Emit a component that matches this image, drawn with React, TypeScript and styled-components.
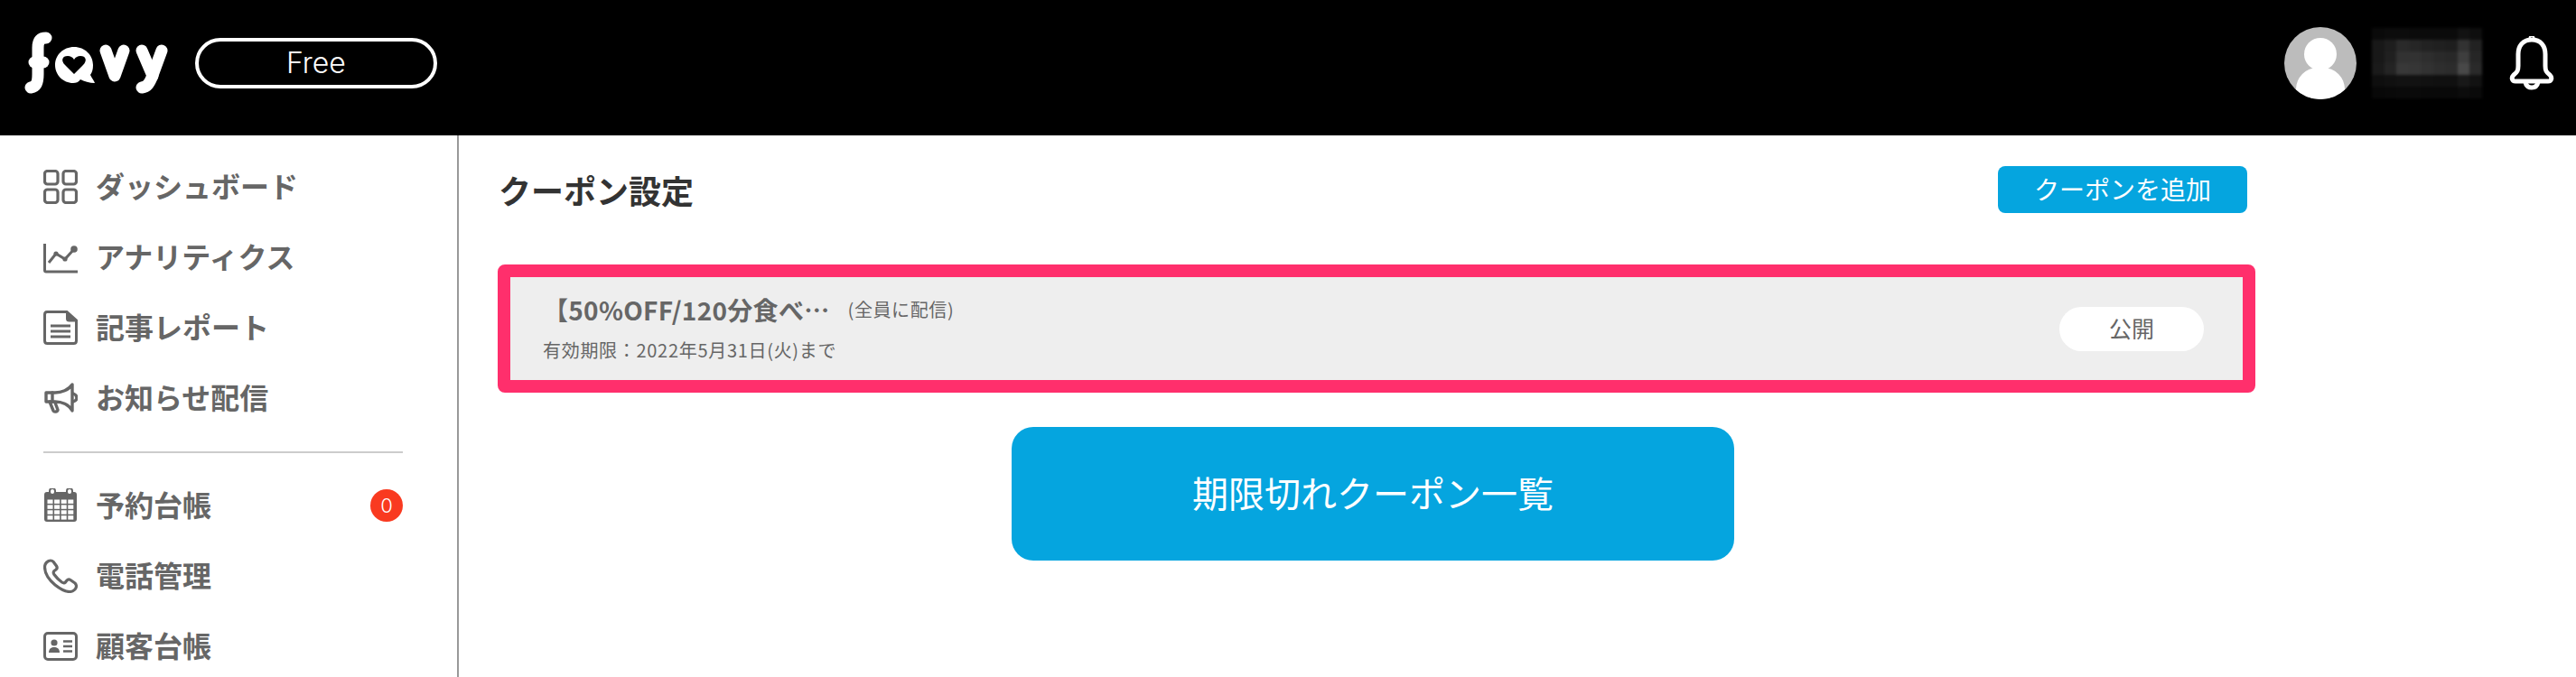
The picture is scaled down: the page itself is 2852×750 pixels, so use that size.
import React from "react";
import styled, { createGlobalStyle } from "styled-components";

const GlobalStyle = createGlobalStyle`
  html, body {
    margin: 0;
    padding: 0;
    background: #fff;
    font-family: "Noto Sans CJK JP", "Noto Sans", sans-serif;
    overflow: hidden;
  }
  * { box-sizing: border-box; }
`;

const mosaic = [
  [10, 12, 12, 11, 11, 11, 11, 18, 14],
  [24, 30, 42, 38, 34, 32, 30, 50, 34],
  [24, 32, 50, 50, 46, 42, 40, 62, 38],
  [26, 36, 56, 54, 50, 46, 44, 72, 42],
  [14, 16, 18, 18, 17, 16, 16, 24, 18],
  [8, 9, 10, 10, 9, 9, 9, 12, 10],
];

const Logo = () => (
  <svg width="160" height="72" viewBox="0 0 160 72" fill="none">
    <g stroke="#fff" strokeWidth="13" strokeLinecap="round" strokeLinejoin="round">
      <path d="M24 8C17 8 15 12 15 19V48C15 58 13 62 7 63" />
      <path d="M11 35H21" />
      <path d="M90 22L100 50L110 22" />
      <path d="M130 22L142 50" />
      <path d="M152 22L141 52C138 59 136 62 130 63" />
    </g>
    <path
      d="M55 18C67 18 76 27 76 38C76 43 75 46 73 49C75 53 77 55 78 58C72 58 66 56 62 54C60 57 57 58 54 58C43 58 34 49 34 38C34 27 43 18 55 18Z"
      fill="#fff"
    />
    <path
      d="M55 48L45 38C40 33 42 28 48 28C51 28 53 29 55 32C57 29 59 28 62 28C68 28 70 33 65 38Z"
      fill="#000"
    />
  </svg>
);

const Bell = () => (
  <svg width="50" height="60" viewBox="0 0 50 60" fill="none" stroke="#fff" strokeWidth="5" strokeLinecap="round" strokeLinejoin="round">
    <path d="M25 4C15 4 10 11 10 20V33C10 38 9 40 5 43C2 46 3 50 7 50H43C47 50 48 46 45 43C41 40 40 38 40 33V20C40 11 35 4 25 4Z" />
    <path d="M18 51C19 56 22 57 25 57C28 57 31 56 32 51" />
    <circle cx="25" cy="2.5" r="1" />
  </svg>
);

const DashboardIcon = () => (
  <svg width="38" height="38" viewBox="0 0 38 38" fill="none" stroke="#666" strokeWidth="3.2">
    <rect x="1.5" y="1.5" width="14.5" height="14.5" rx="3" />
    <rect x="22" y="1.5" width="14.5" height="14.5" rx="3" />
    <rect x="1.5" y="22" width="14.5" height="14.5" rx="3" />
    <rect x="22" y="22" width="14.5" height="14.5" rx="3" />
  </svg>
);

const AnalyticsIcon = () => (
  <svg width="38" height="38" viewBox="0 0 38 38" fill="none" stroke="#666" strokeWidth="3">
    <path d="M1.5 4V33.5C1.5 34.5 2 35 3 35H38" />
    <path d="M6 25L14 15L24 21L34 10" strokeWidth="3" />
    <circle cx="14" cy="15" r="2.6" fill="#666" stroke="none" />
    <circle cx="24" cy="21" r="2.6" fill="#666" stroke="none" />
    <circle cx="34" cy="10" r="3.8" fill="#666" stroke="none" />
  </svg>
);

const ReportIcon = () => (
  <svg width="38" height="38" viewBox="0 0 38 38" fill="none" stroke="#666" strokeWidth="3">
    <path d="M4 1.5H26L36.5 11V33.5C36.5 35.5 35.5 36.5 33.5 36.5H4.5C2.5 36.5 1.5 35.5 1.5 33.5V4.5C1.5 2.5 2.5 1.5 4 1.5Z" />
    <path d="M26 2V9C26 10.5 27 11.5 28.5 11.5H36" fill="#666" strokeWidth="2" />
    <path d="M8 17H30M8 23H30M8 29H30" />
  </svg>
);

const MegaphoneIcon = () => (
  <svg width="38" height="38" viewBox="0 0 38 38" fill="none" stroke="#666" strokeWidth="3.4" strokeLinejoin="round" strokeLinecap="round">
    <path d="M32 4V33C28 26 20 23 13 23H3V13H13C20 13 28 10 32 4Z" />
    <path d="M33 14C36 15 37 17 37 19C37 21 36 22 33 23" />
    <path d="M10 13V23" />
    <path d="M7 23L11 33C12 35 16 34 16 32L13 24" />
  </svg>
);

const CalendarIcon = () => (
  <svg width="38" height="38" viewBox="0 0 38 38" fill="none">
    <path d="M4 4H34C36 4 37 5 37 7V34C37 36 36 37 34 37H4C2 37 1 36 1 34V7C1 5 2 4 4 4Z" fill="#666" />
    <rect x="7" y="0" width="6" height="7" rx="3" fill="#fff" stroke="#666" strokeWidth="2" />
    <rect x="26" y="0" width="6" height="7" rx="3" fill="#fff" stroke="#666" strokeWidth="2" />
    {[0, 1, 2, 3].map((row) =>
      [0, 1, 2, 3].map((col) => (
        <rect key={`${row}-${col}`} x={4.5 + col * 7.6} y={12.5 + row * 5.9} width="6" height="4.4" fill="#fff" />
      ))
    )}
  </svg>
);

const PhoneIcon = () => (
  <svg width="38" height="38" viewBox="0 0 38 38" fill="none" stroke="#666" strokeWidth="3.2" strokeLinejoin="round">
    <path d="M8 2C5 2 1.5 5 1.5 9C1.5 17 7 24 13 29C18 33 24 36.5 29 36.5C33 36.5 36.5 33.5 36.5 30.5C36.5 29 36 28 35 27L30 23.5C28.5 22.5 27 22.8 26 24L24.5 26C23.5 27 22 27 20.5 26C17 23.5 14.5 21 12 17.5C11 16 11 14.5 12 13.5L14 12C15.2 11 15.5 9.5 14.5 8L11 3.2C10.2 2.3 9 2 8 2Z" />
  </svg>
);

const CardIcon = () => (
  <svg width="38" height="38" viewBox="0 0 38 38" fill="none" stroke="#666" strokeWidth="3">
    <rect x="1.5" y="4.5" width="35" height="29" rx="3.5" />
    <circle cx="12" cy="15" r="3.6" fill="#666" stroke="none" />
    <path d="M6 26C6 21.5 9 20 12 20C15 20 18 21.5 18 26Z" fill="#666" stroke="none" />
    <path d="M22 13.5H32M22 19H32M22 24.5H32" strokeWidth="2.4" />
  </svg>
);

const navTop = [
  { icon: <DashboardIcon />, label: "ダッシュボード" },
  { icon: <AnalyticsIcon />, label: "アナリティクス" },
  { icon: <ReportIcon />, label: "記事レポート" },
  { icon: <MegaphoneIcon />, label: "お知らせ配信" },
];

const navBottom = [
  { icon: <CalendarIcon />, label: "予約台帳", badge: 0 },
  { icon: <PhoneIcon />, label: "電話管理" },
  { icon: <CardIcon />, label: "顧客台帳" },
];

export default function App() {
  return (
    <Page>
      <GlobalStyle />
      <Header>
        <HeaderLeft>
          <Logo />
          <PlanPill>Free</PlanPill>
        </HeaderLeft>
        <HeaderRight>
          <Avatar>
            <AvatarHead />
            <AvatarBody />
          </Avatar>
          <Mosaic>
            {mosaic.flat().map((v, i) => (
              <MosaicCell key={i} style={{ background: `rgb(${v},${v},${v})` }} />
            ))}
          </Mosaic>
          <Bell />
        </HeaderRight>
      </Header>
      <Body>
        <Sidebar>
          <NavGroup>
            {navTop.map((item) => (
              <NavRow key={item.label}>
                <NavIcon>{item.icon}</NavIcon>
                <NavLabel>{item.label}</NavLabel>
              </NavRow>
            ))}
          </NavGroup>
          <Divider />
          <NavGroup>
            {navBottom.map((item) => (
              <NavRow key={item.label}>
                <NavIcon>{item.icon}</NavIcon>
                <NavLabel>{item.label}</NavLabel>
                {item.badge !== undefined && <Badge>{item.badge}</Badge>}
              </NavRow>
            ))}
          </NavGroup>
        </Sidebar>
        <Main>
          <TitleRow>
            <Title>クーポン設定</Title>
            <AddButton>クーポンを追加</AddButton>
          </TitleRow>
          <CouponFrame>
            <CouponInfo>
              <CouponTitleRow>
                <CouponTitle>【50%OFF/120分食べ…</CouponTitle>
                <CouponTarget>(全員に配信)</CouponTarget>
              </CouponTitleRow>
              <CouponDate>有効期限：2022年5月31日(火)まで</CouponDate>
            </CouponInfo>
            <StatusPill>公開</StatusPill>
          </CouponFrame>
          <ExpiredRow>
            <ExpiredButton>期限切れクーポン一覧</ExpiredButton>
          </ExpiredRow>
        </Main>
      </Body>
    </Page>
  );
}

const Page = styled.div`
  width: 2852px;
  height: 750px;
  overflow: hidden;
  display: flex;
  flex-direction: column;
`;

const Header = styled.header`
  height: 150px;
  flex: none;
  background: #000;
  display: flex;
  justify-content: space-between;
  align-items: center;
  padding: 0 24px 10px 27px;
`;

const HeaderLeft = styled.div`
  display: flex;
  align-items: center;
  gap: 29px;
`;

const PlanPill = styled.div`
  width: 268px;
  height: 56px;
  border: 4px solid #fff;
  border-radius: 28px;
  color: #fff;
  display: flex;
  align-items: center;
  justify-content: center;
  font-family: Inter, "Noto Sans", sans-serif;
  font-size: 32px;
  font-weight: 300;
  padding: 0 0 2px 0;
`;

const HeaderRight = styled.div`
  display: flex;
  align-items: center;
`;

const Avatar = styled.div`
  position: relative;
  width: 80px;
  height: 80px;
  border-radius: 50%;
  background: #bcbcbc;
  overflow: hidden;
`;

const AvatarHead = styled.div`
  position: absolute;
  left: 22px;
  top: 12px;
  width: 36px;
  height: 36px;
  border-radius: 50%;
  background: #fff;
`;

const AvatarBody = styled.div`
  position: absolute;
  left: 13px;
  top: 45px;
  width: 54px;
  height: 50px;
  border-radius: 24px 24px 0 0;
  background: #fff;
`;

const Mosaic = styled.div`
  width: 122px;
  height: 78px;
  margin: 0 30px 0 17px;
  display: grid;
  grid-template-columns: repeat(9, 1fr);
  grid-template-rows: repeat(6, 1fr);
  filter: blur(1.5px);
`;

const MosaicCell = styled.div``;

const Body = styled.div`
  flex: 1;
  display: flex;
  min-height: 0;
`;

const Sidebar = styled.aside`
  width: 508px;
  flex: none;
  border-right: 2px solid #999;
  padding: 38px 60px 0 48px;
`;

const NavGroup = styled.div`
  display: flex;
  flex-direction: column;
  gap: 40px;
`;

const NavRow = styled.div`
  height: 38px;
  display: flex;
  align-items: center;
`;

const NavIcon = styled.span`
  width: 38px;
  height: 38px;
  flex: none;
  display: block;
  margin-right: 20px;
  svg { display: block; }
`;

const NavLabel = styled.span`
  flex: 1;
  color: #666;
  font-size: 32px;
  font-weight: 700;
  line-height: 38px;
  margin-top: -4px;
  white-space: nowrap;
`;

const Badge = styled.span`
  width: 36px;
  height: 36px;
  border-radius: 50%;
  background: #f93a20;
  color: #fff;
  font-family: Inter, sans-serif;
  font-size: 22px;
  font-weight: 300;
  display: flex;
  align-items: center;
  justify-content: center;
`;

const Divider = styled.div`
  height: 2px;
  background: #ccc;
  margin: 40px 0 39px;
`;

const Main = styled.main`
  width: 1946px;
  margin-left: 43px;
  flex: none;
`;

const TitleRow = styled.div`
  display: flex;
  justify-content: space-between;
  align-items: center;
  height: 52px;
  margin-top: 34px;
  padding: 0 9px 0 1px;
`;

const Title = styled.h1`
  margin: 0;
  color: #333;
  font-size: 36px;
  font-weight: 700;
  line-height: 52px;
`;

const AddButton = styled.div`
  width: 276px;
  height: 52px;
  border-radius: 8px;
  background: #05a5df;
  color: #fff;
  font-size: 28px;
  padding-bottom: 3px;
  display: flex;
  align-items: center;
  justify-content: center;
`;

const CouponFrame = styled.div`
  height: 142px;
  margin-top: 57px;
  border: 14px solid #ff2f6c;
  border-radius: 8px;
  background: #eee;
  display: flex;
  align-items: center;
  justify-content: space-between;
  padding: 0 43px 0 36px;
`;

const CouponInfo = styled.div`
  display: flex;
  flex-direction: column;
  gap: 12px;
  margin-top: -3px;
`;

const CouponTitleRow = styled.div`
  display: flex;
  align-items: center;
  gap: 20px;
`;

const CouponTitle = styled.span`
  color: #666;
  font-size: 28px;
  font-weight: 700;
  letter-spacing: 0.3px;
  line-height: 38px;
`;

const CouponTarget = styled.span`
  color: #666;
  font-size: 20px;
  letter-spacing: 0.6px;
  line-height: 38px;
`;

const CouponDate = styled.div`
  color: #666;
  font-size: 20px;
  letter-spacing: 0.7px;
  line-height: 28px;
`;

const StatusPill = styled.div`
  width: 160px;
  height: 49px;
  border-radius: 25px;
  background: #fff;
  color: #666;
  font-size: 25px;
  padding-bottom: 3px;
  display: flex;
  align-items: center;
  justify-content: center;
`;

const ExpiredRow = styled.div`
  display: flex;
  justify-content: center;
  margin-top: 38px;
  padding-right: 8px;
`;

const ExpiredButton = styled.div`
  width: 800px;
  height: 148px;
  border-radius: 24px;
  background: #05a5df;
  color: #fff;
  font-size: 40px;
  padding-bottom: 5px;
  display: flex;
  align-items: center;
  justify-content: center;
`;
